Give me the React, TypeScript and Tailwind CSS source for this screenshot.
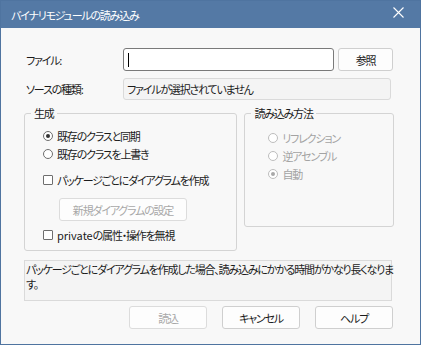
import React from "react";

// ダイアログ：バイナリモジュールの読み込み

const font =
  "font-['Meiryo_UI','Noto_Sans_CJK_JP',sans-serif] [font-feature-settings:'palt'] tracking-[-1.2px]";

function Radio({ checked, disabled, label }: { checked?: boolean; disabled?: boolean; label: string }) {
  return (
    <div className={`flex h-[18px] items-center gap-[4px] ${disabled ? "text-[#a3a3a3]" : "text-[#1b1b1b]"}`}>
      <span
        className={`flex h-[10px] w-[10px] items-center justify-center rounded-full border bg-white ${
          disabled ? "border-[#bdbdbd]" : "border-[#6e6e6e]"
        }`}
      >
        {checked && (
          <span className={`h-[4px] w-[4px] rounded-full ${disabled ? "bg-[#a8a8a8]" : "bg-[#333]"}`} />
        )}
      </span>
      <span>{label}</span>
    </div>
  );
}

function Check({ children }: { children: React.ReactNode }) {
  return (
    <div className="flex h-[18px] items-center gap-[4px] text-[#1b1b1b]">
      <span className="h-[10px] w-[10px] rounded-[1px] border border-[#6e6e6e] bg-white" />
      <span>{children}</span>
    </div>
  );
}

function Button({ children, disabled, className = "" }: { children: React.ReactNode; disabled?: boolean; className?: string }) {
  return (
    <div
      className={`flex h-[23px] items-center justify-center rounded-[3px] border bg-[#fdfdfd] ${
        disabled ? "border-[#dcdcdc] text-[#a8a8a8]" : "border-[#cfcfcf] text-[#1b1b1b]"
      } ${className}`}
    >
      {children}
    </div>
  );
}

export default function App() {
  return (
    <div className={`flex h-[345px] w-[421px] flex-col border border-[#4f74a0] bg-[#f8f8f8] text-[11px] leading-[16px] ${font}`}>
      {/* タイトルバー */}
      <div className="flex h-[27px] shrink-0 items-center justify-between bg-[#5479a5] pl-[10px] pr-[16px] text-white">
        <span>バイナリモジュールの読み込み</span>
        <svg width="11" height="11" viewBox="0 0 11 11" className="-mt-[5px]">
          <path d="M0.5 0.5 L10.5 10.5 M10.5 0.5 L0.5 10.5" stroke="white" strokeWidth="1.1" />
        </svg>
      </div>

      <div className="flex flex-col pl-[23px] pr-[26px]">
        {/* ファイル */}
        <div className="mt-[20px] flex h-[23px] items-center">
          <span className="w-[99px] pl-[2px] text-[#1b1b1b]">ファイル:</span>
          <div className="flex h-[23px] w-[211px] items-center rounded-[3px] border border-[#7a7a7a] bg-white pl-[4px]">
            <span className="h-[14px] w-px bg-black" />
          </div>
          <Button className="ml-[4px] w-[55px]">参照</Button>
        </div>

        {/* ソースの種類 */}
        <div className="mt-[7px] flex h-[22px] items-center">
          <span className="w-[99px] pl-[2px] text-[#1b1b1b]">ソースの種類:</span>
          <div className="flex h-[22px] w-[268px] items-center rounded-[3px] border border-[#dadada] bg-[#f4f4f4] pl-[3px] text-[#1b1b1b]">
            ファイルが選択されていません
          </div>
        </div>

        {/* グループ */}
        <div className="mt-[13px] flex items-start gap-[7px]">
          <div className="relative flex h-[138px] w-[214px] flex-col rounded-[3px] border border-[#d4d4d4] pl-[18px] pt-[13px]">
            <span className="absolute -top-[9px] left-[6px] bg-[#f8f8f8] px-[3px] text-[#1b1b1b]">生成</span>
            <Radio checked label="既存のクラスと同期" />
            <Radio label="既存のクラスを上書き" />
            <div className="mt-[8px]">
              <Check>パッケージごとにダイアグラムを作成</Check>
            </div>
            <Button disabled className="ml-[16px] mt-[9px] w-[128px]">
              新規ダイアグラムの設定
            </Button>
            <div className="mt-[5px]">
              <Check>
                <span className="tracking-normal">private</span>の属性・操作を無視
              </Check>
            </div>
          </div>

          <div className="relative flex h-[114px] w-[150px] flex-col rounded-[3px] border border-[#d4d4d4] pl-[23px] pt-[15px]">
            <span className="absolute -top-[9px] left-[6px] bg-[#f8f8f8] px-[3px] text-[#1b1b1b]">読み込み方法</span>
            <Radio disabled label="リフレクション" />
            <Radio disabled label="逆アセンブル" />
            <Radio disabled checked label="自動" />
          </div>
        </div>

        {/* 説明 */}
        <div className="mt-[9px] h-[41px] w-[368px] whitespace-nowrap border border-[#dadada] bg-[#f4f4f4] pl-px pt-[1px] text-[#1b1b1b] leading-[15px]">
          パッケージごとにダイアグラムを作成した場合、読み込みにかかる時間がかなり長くなりま
          <br />
          す。
        </div>

        {/* ボタン */}
        <div className="mt-[5px] flex justify-end gap-[15px] pr-[1px]">
          <Button disabled className="w-[78px]">読込</Button>
          <Button className="w-[78px]">キャンセル</Button>
          <Button className="w-[78px]">ヘルプ</Button>
        </div>
      </div>
    </div>
  );
}
